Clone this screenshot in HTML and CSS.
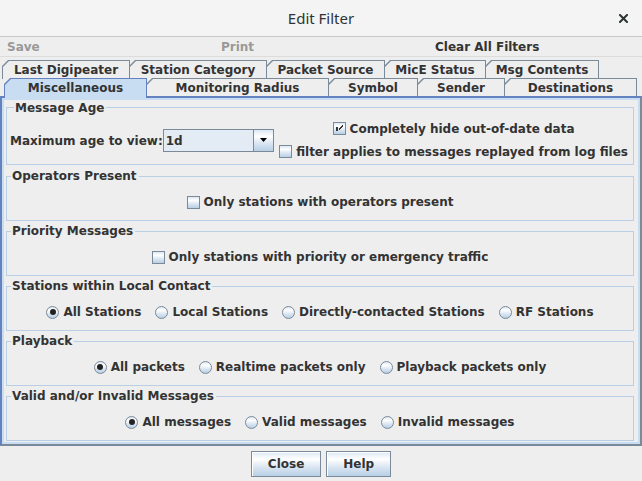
FILE: index.html
```html
<!DOCTYPE html>
<html>
<head>
<meta charset="utf-8">
<title>Edit Filter</title>
<link rel="stylesheet" href="styles.css">
</head>
<body>
<div class="window">
  <header class="titlebar">
    <span></span>
    <span class="title">Edit Filter</span>
    <svg class="close" width="9" height="9" viewBox="0 0 9 9"><path d="M1 1L8 8M8 1L1 8" stroke="#2e3436" stroke-width="2" stroke-linecap="square"/></svg>
  </header>
  <nav class="menubar">
    <span class="menu disabled">Save</span>
    <span class="menu disabled">Print</span>
    <span class="menu">Clear All Filters</span>
  </nav>
  <div class="tabs">
    <div class="tabrow back">
      <div class="tab b1">Last Digipeater</div>
      <div class="tab b2">Station Category</div>
      <div class="tab b3">Packet Source</div>
      <div class="tab b4">MicE Status</div>
      <div class="tab b5">Msg Contents</div>
    </div>
    <div class="tabrow front">
      <div class="tab sel f1">Miscellaneous</div>
      <div class="tab f2">Monitoring Radius</div>
      <div class="tab f3">Symbol</div>
      <div class="tab f4">Sender</div>
      <div class="tab f5">Destinations</div>
    </div>
  </div>
  <main class="content">
    <div class="inner">
      <fieldset class="group first">
        <legend>Message Age</legend>
        <div class="agerow">
          <span class="agelabel">Maximum age to view:</span>
          <div class="combo">
            <span class="combo-value">1d</span>
            <span class="combo-btn"><svg width="7" height="4" viewBox="0 0 7 4"><path d="M0 0H7L3.5 4Z" fill="#000"/></svg></span>
          </div>
          <div class="agechecks">
            <label class="opt"><span class="cb checked"><svg width="13" height="13" viewBox="0 0 13 13"><path d="M3 5h2v4h-2z" fill="#333"/><path d="M9.5 3.5L5.5 7.5M9.5 4.5L5.5 8.5" stroke="#333" stroke-width="1" shape-rendering="crispEdges"/></svg></span>Completely hide out-of-date data</label>
            <label class="opt"><span class="cb"></span>filter applies to messages replayed from log files</label>
          </div>
        </div>
      </fieldset>
      <fieldset class="group">
        <legend>Operators Present</legend>
        <div class="row"><label class="opt"><span class="cb"></span>Only stations with operators present</label></div>
      </fieldset>
      <fieldset class="group">
        <legend>Priority Messages</legend>
        <div class="row"><label class="opt"><span class="cb"></span>Only stations with priority or emergency traffic</label></div>
      </fieldset>
      <fieldset class="group">
        <legend>Stations within Local Contact</legend>
        <div class="row radios">
          <label class="opt"><span class="rb on"></span>All Stations</label>
          <label class="opt"><span class="rb"></span>Local Stations</label>
          <label class="opt"><span class="rb"></span>Directly-contacted Stations</label>
          <label class="opt"><span class="rb"></span>RF Stations</label>
        </div>
      </fieldset>
      <fieldset class="group">
        <legend>Playback</legend>
        <div class="row radios">
          <label class="opt"><span class="rb on"></span>All packets</label>
          <label class="opt"><span class="rb"></span>Realtime packets only</label>
          <label class="opt"><span class="rb"></span>Playback packets only</label>
        </div>
      </fieldset>
      <fieldset class="group last">
        <legend>Valid and/or Invalid Messages</legend>
        <div class="row radios">
          <label class="opt"><span class="rb on"></span>All messages</label>
          <label class="opt"><span class="rb"></span>Valid messages</label>
          <label class="opt"><span class="rb"></span>Invalid messages</label>
        </div>
      </fieldset>
    </div>
  </main>
  <footer class="buttons">
    <button class="btn">Close</button>
    <button class="btn">Help</button>
  </footer>
</div>
</body>
</html>
```
FILE: styles.css
```css
* { box-sizing: border-box; }
html, body { margin: 0; padding: 0; }
body {
  width: 642px;
  height: 481px;
  overflow: hidden;
  background: #eeeeee;
  font-family: "DejaVu Sans", sans-serif;
  font-weight: bold;
  font-size: 12px;
  color: #333333;
}
.window { width: 642px; height: 481px; display: flex; flex-direction: column; }

/* title bar */
.titlebar {
  height: 37px;
  flex: none;
  display: grid;
  grid-template-columns: 1fr auto 1fr;
  align-items: center;
  background: #f4f4f4;
  border-bottom: 1px solid #c9c9c6;
}
.title {
  font-family: "Noto Sans", "Open Sans", sans-serif;
  font-weight: normal;
  font-size: 15px;
  color: #2e3436;
  line-height: 20px;
  margin-top: -1px;
}
.close { justify-self: end; margin-right: 14px; }

/* menu bar */
.menubar {
  height: 20px;
  flex: none;
  display: grid;
  grid-template-columns: repeat(3, 214px);
  align-items: center;
  border-bottom: 1px solid #dcdcdc;
}
.menu { padding-left: 7px; line-height: 14px; }
.menu.disabled { color: #999999; }

/* tabs */
.tabs { flex: none; padding-top: 3px; position: relative; z-index: 1; }
.tabrow { display: flex; }
.tabrow.back { padding-left: 3px; height: 19px; }
.tabrow.front { padding-left: 5px; height: 18px; margin-top: -1px; }
.tab {
  position: relative;
  z-index: 0;
  height: 19px;
  margin-left: -1px;
  display: flex;
  align-items: center;
  justify-content: center;
  line-height: 14px;
  white-space: nowrap;
}
.front .tab { height: 18px; padding-top: 1px; }
.tab::before, .tab::after {
  content: "";
  position: absolute;
  z-index: -1;
}
.tab::before {
  inset: 0;
  background: #7a8a99;
  clip-path: polygon(0 6px, 6px 0, 100% 0, 100% 100%, 0 100%);
}
.tab::after {
  inset: 1px 1px 0 1px;
  background: #eeeeee;
  clip-path: polygon(0 6px, 6px 0, 100% 0, 100% 100%, 0 100%);
}
.front .tab.sel { height: 20px; margin-bottom: -2px; z-index: 2; padding-bottom: 1px; }
.tab.sel::before { background: #6382bf; }
.tab.sel::after { background: #c8ddf2; }

.b1 { width: 128px; }
.b2 { width: 138px; }
.b3 { width: 119px; }
.b4 { width: 102px; }
.b5 { width: 114px; }
.f1 { width: 143px; }
.f2 { width: 183px; }
.f3 { width: 90px; }
.f4 { width: 88px; }
.f5 { width: 133px; }

/* content */
.content {
  flex: none;
  height: 350px;
  border: 2px solid #6382bf;
  border-right-color: #7a8a99;
  border-bottom-color: #7a8a99;
  background: #c8ddf2;
  padding: 2px;
}
.inner {
  height: 100%;
  background: #eeeeee;
  display: flex;
  flex-direction: column;
}
.group {
  border: 1px solid #b8cfe5;
  margin: 0 4px 3px 2px;
  padding: 10px 0 9px;
  min-width: 0;
}
.group.first { margin-bottom: 4px; padding: 3px 5px 1px 3px; }
.group.last { margin-bottom: 0; }
.group legend {
  margin-left: 4px;
  padding: 0 2px 0 1px;
  height: 14px;
  line-height: 14px;
  font-size: 12px;
}
.group.first legend { padding-top: 1px; }

.agerow { display: flex; align-items: center; height: 46px; }
.agelabel { line-height: 14px; white-space: nowrap; padding-top: 1px; }
.combo {
  width: 111px;
  height: 23px;
  display: flex;
  border: 1px solid #7a8a99;
  background: linear-gradient(#dde8f3 0%, #ffffff 30%, #dde8f3 60%, #b8cfe5 100%);
}
.combo-value { flex: 1; padding-left: 2px; padding-top: 1px; line-height: 20px; background: #e3ebf4; }
.combo-btn {
  width: 20px;
  border-left: 1px solid #7a8a99;
  display: flex;
  align-items: center;
  justify-content: center;
}
.agechecks { margin-left: auto; display: flex; flex-direction: column; align-items: center; }
.agechecks .opt { height: 23px; }

.row { display: flex; justify-content: center; align-items: center; height: 18px; }
.row.radios { gap: 14px; }
.opt { display: flex; align-items: center; gap: 4px; white-space: nowrap; line-height: 14px; }

.cb {
  width: 13px;
  height: 13px;
  flex: none;
  border: 1px solid #7a8a99;
  background: linear-gradient(#dde8f3 0%, #ffffff 30%, #dde8f3 60%, #b8cfe5 100%);
  position: relative;
}
.cb svg { position: absolute; left: -1px; top: -1px; }
.rb {
  width: 13px;
  height: 13px;
  flex: none;
  border-radius: 50%;
  border: 1px solid #7a8a99;
  background: linear-gradient(#dde8f3 0%, #ffffff 30%, #dde8f3 60%, #b8cfe5 100%);
  display: flex;
  align-items: center;
  justify-content: center;
}
.rb.on::after {
  content: "";
  width: 6px;
  height: 6px;
  border-radius: 50%;
  background: #222;
}

/* buttons */
.buttons {
  flex: 1;
  display: flex;
  justify-content: center;
  align-items: flex-start;
  gap: 5px;
  padding-top: 5px;
}
.btn {
  height: 26px;
  padding: 0 16px;
  border: 1px solid #7a8a99;
  border-radius: 0;
  font-family: "DejaVu Sans", sans-serif;
  font-weight: bold;
  font-size: 12px;
  color: #333333;
  background: linear-gradient(#dde8f3 0%, #ffffff 30%, #dde8f3 60%, #b8cfe5 100%);
  box-shadow: inset 1px 1px 0 #ffffff;
}
```
